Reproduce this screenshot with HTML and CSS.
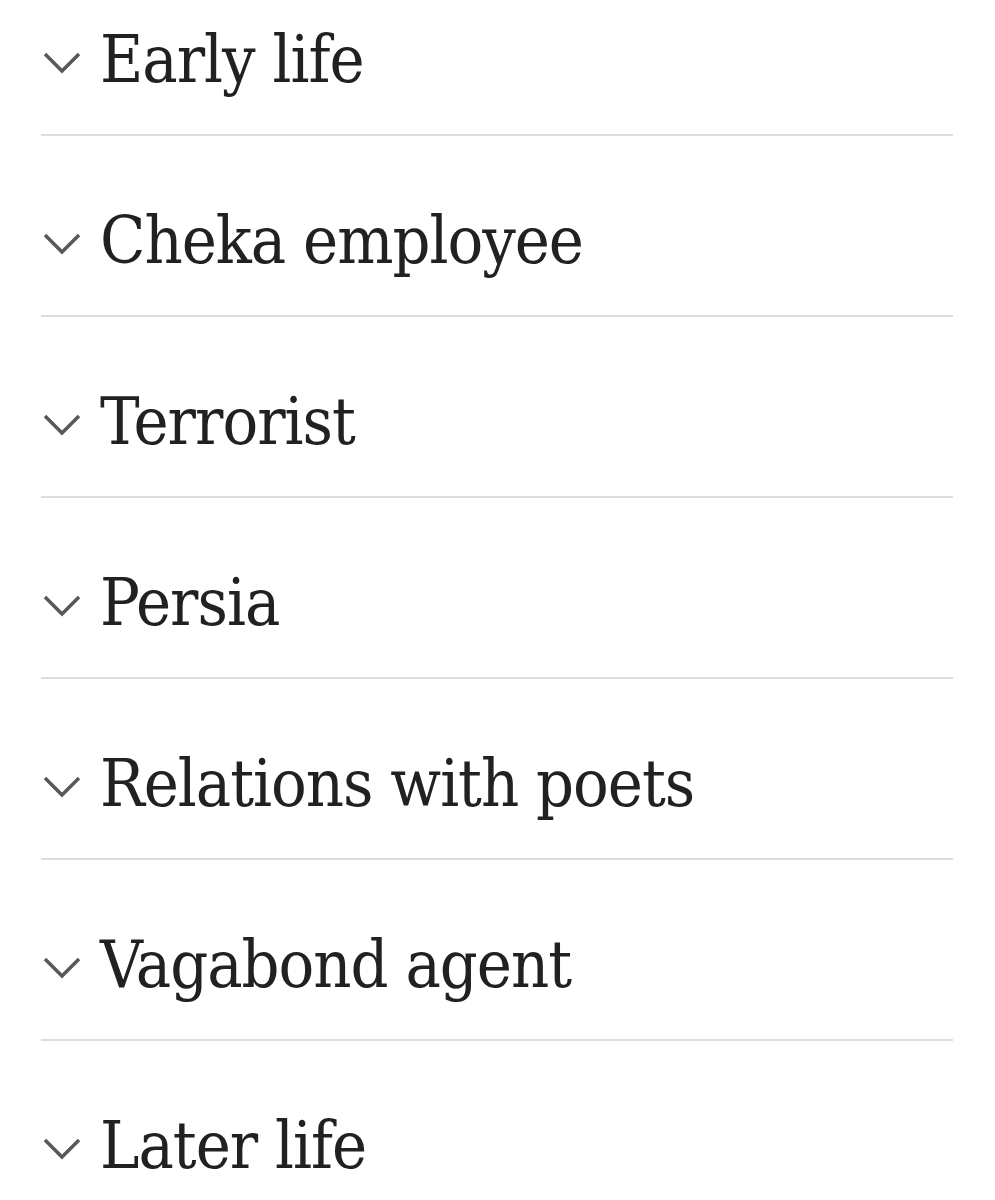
FILE: index.html
```html
<!DOCTYPE html>
<html lang="en">
<head>
<meta charset="utf-8">
<link rel="stylesheet" href="styles.css">
</head>
<body>
<ul class="sections">
  <li class="section"><svg class="chev" viewBox="0 0 38 22"><polyline points="2,2 19,19 36,2"/></svg><span class="title">Early life</span></li>
  <li class="section"><svg class="chev" viewBox="0 0 38 22"><polyline points="2,2 19,19 36,2"/></svg><span class="title">Cheka employee</span></li>
  <li class="section"><svg class="chev" viewBox="0 0 38 22"><polyline points="2,2 19,19 36,2"/></svg><span class="title">Terrorist</span></li>
  <li class="section"><svg class="chev" viewBox="0 0 38 22"><polyline points="2,2 19,19 36,2"/></svg><span class="title">Persia</span></li>
  <li class="section"><svg class="chev" viewBox="0 0 38 22"><polyline points="2,2 19,19 36,2"/></svg><span class="title">Relations with poets</span></li>
  <li class="section"><svg class="chev" viewBox="0 0 38 22"><polyline points="2,2 19,19 36,2"/></svg><span class="title">Vagabond agent</span></li>
  <li class="section"><svg class="chev" viewBox="0 0 38 22"><polyline points="2,2 19,19 36,2"/></svg><span class="title">Later life</span></li>
</ul>
</body>
</html>
```
FILE: styles.css
```css
html, body {
  margin: 0;
  padding: 0;
  background: #ffffff;
  overflow: hidden;
}
.sections {
  list-style: none;
  margin: -45px 42px 0 41px;
  padding: 0;
}
.section {
  display: flex;
  align-items: flex-start;
  gap: 19px;
  padding: 72px 0 41px 2px;
  border-bottom: 2px solid #dddddd;
}
.section:last-child {
  border-bottom: none;
}
.chev {
  flex: none;
  width: 38px;
  height: 22px;
  margin-top: 25px;
  fill: none;
  stroke: #54595d;
  stroke-width: 3.5;
  stroke-linecap: butt;
  stroke-linejoin: miter;
}
.title {
  font-family: "DejaVu Serif Condensed", "DejaVu Serif", serif;
  font-stretch: condensed;
  font-size: 66px;
  line-height: 66px;
  letter-spacing: -1px;
  color: #202122;
}
```
